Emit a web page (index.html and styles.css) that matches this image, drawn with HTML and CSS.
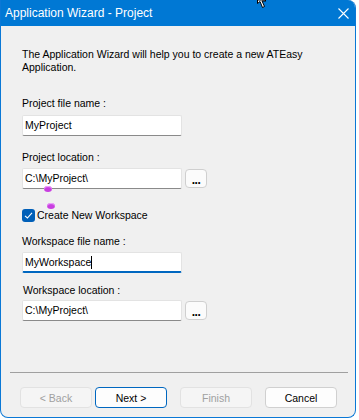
FILE: index.html
```html
<!DOCTYPE html>
<html lang="en">

<head>
    <meta charset="UTF-8">
    <title>Application Wizard - Project</title>
    <link rel="stylesheet" href="styles.css">
</head>

<body>
    <div class="window">
        <div class="titlebar">
            <span class="title">Application Wizard - Project</span>
            <svg class="close" width="11" height="11" viewBox="0 0 11 11">
                <path d="M0.5 0.5 L10.5 10.5 M10.5 0.5 L0.5 10.5" stroke="#fff" stroke-width="1.1" fill="none" />
            </svg>
        </div>

        <div class="content">
            <p class="intro">The Application Wizard will help you to create a new ATEasy<br>Application.</p>

            <!-- Project -->
            <div class="label first">Project file name :</div>
            <div class="field gap-small">MyProject</div>

            <div class="label">Project location :</div>
            <div class="row">
                <div class="field">C:\MyProject\</div>
                <button class="browse">...</button>
            </div>

            <!-- Workspace -->
            <label class="check">
                <span class="box">
                    <svg width="9" height="9" viewBox="0 0 9 9">
                        <path d="M1 4.8 L3.4 7 L8 1.8" stroke="#fff" stroke-width="1.1" fill="none" />
                    </svg>
                </span>
                Create New Workspace
            </label>

            <div class="label tight">Workspace file name :</div>
            <div class="field focus">MyWorkspace<span class="caret"></span></div>

            <div class="label indent">Workspace location :</div>
            <div class="row near">
                <div class="field">C:\MyProject\</div>
                <button class="browse">...</button>
            </div>
        </div>

        <div class="footer">
            <div class="sep"></div>
            <div class="buttons">
                <button class="btn" disabled>&lt; Back</button>
                <button class="btn default">Next &gt;</button>
                <button class="btn wide" disabled>Finish</button>
                <button class="btn wide">Cancel</button>
            </div>
        </div>

        <!-- stray pen markers on top of the dialog -->
        <span class="marker m1"></span>
        <span class="marker m2"></span>
    </div>

    <svg class="cursor" width="12" height="9" viewBox="0 0 12 9">
        <path d="M0.5 0 L0.5 3.5 L3 1.5 L5.5 7.5 L7.5 6.5 L5 1 L9 1 L8 0 Z" fill="#fff" stroke="#000" stroke-width="1" />
    </svg>
</body>

</html>
```

FILE: styles.css
```css
* {
    box-sizing: border-box;
    margin: 0;
    padding: 0;
}

body {
    background: #fff;
    font-family: "Liberation Sans", Arial, sans-serif;
    font-size: 10.5px;
    color: #000;
}

.window {
    position: relative;
    width: 356px;
    height: 418px;
    background: #f0f0f0;
    border: 1px solid #0a78d6;
    border-top: none;
    border-radius: 0 8px 8px 8px;
    display: flex;
    flex-direction: column;
    overflow: hidden;
}

.titlebar {
    height: 26px;
    background: #0078d4;
    color: #fff;
    display: flex;
    align-items: center;
    justify-content: space-between;
    padding: 0 6px 0 4px;
    font-size: 12px;
}

.close {
    display: block;
}

.content {
    flex: 1;
    padding: 0 21px;
    line-height: 13px;
}

.intro {
    margin-top: 22px;
}

.label {
    margin-top: 15px;
}

.label.first {
    margin-top: 23px;
}

.label.tight {
    margin-top: 13px;
}

.label.indent {
    padding-left: 1px;
    margin-top: 11px;
}

.field {
    width: 160px;
    height: 21px;
    margin-top: 4px;
    padding-left: 2px;
    background: #fff;
    border: 1px solid #e3e3e3;
    border-bottom-color: #8a8a8a;
    border-radius: 2px;
    display: flex;
    align-items: center;
    white-space: nowrap;
}

.field.gap-small {
    margin-top: 5px;
}

.field.focus {
    border-bottom: 2px solid #0067c0;
}

.caret {
    display: inline-block;
    width: 1px;
    height: 13px;
    background: #000;
}

.row {
    display: flex;
    align-items: center;
    gap: 3px;
    margin-top: 4px;
}

.row.near {
    margin-top: 3px;
}

.row .field {
    margin-top: 0;
}

.browse {
    width: 22px;
    height: 19px;
    background: #fbfbfb;
    border: 1px solid #cfcfcf;
    border-radius: 4px;
    font-family: inherit;
    font-size: 12px;
    font-weight: bold;
    line-height: 17px;
    padding-top: 2px;
    letter-spacing: -0.5px;
}

.check {
    display: flex;
    align-items: center;
    gap: 2px;
    margin-top: 20px;
}

.box {
    width: 13px;
    height: 13px;
    border-radius: 3px;
    background: #005fb8;
    display: flex;
    align-items: center;
    justify-content: center;
}

.footer {
    padding-bottom: 9px;
}

.sep {
    height: 1px;
    margin: 0 7px 0 9px;
    background: #a0a0a0;
}

.buttons {
    display: flex;
    padding: 14px 0 0 19px;
    gap: 3px;
}

.btn {
    width: 72px;
    height: 21px;
    background: #fdfdfd;
    border: 1px solid #d0d0d0;
    border-radius: 4px;
    font-family: inherit;
    font-size: 10.5px;
    color: #000;
}

.btn.default {
    border-color: #0067c0;
}

.btn:disabled {
    background: #f5f5f5;
    border-color: #e2e2e2;
    color: #a0a0a0;
}

.btn.wide {
    margin-left: 10px;
}

.marker {
    position: absolute;
    width: 8px;
    height: 6px;
    border-radius: 50%;
    background: #c83ee0;
    box-shadow: inset 0 1px 1px #f0b0ff;
}

.m1 {
    left: 43px;
    top: 186px;
}

.m2 {
    left: 46px;
    top: 203px;
}

.cursor {
    position: absolute;
    left: 257px;
    top: 0;
}
```
